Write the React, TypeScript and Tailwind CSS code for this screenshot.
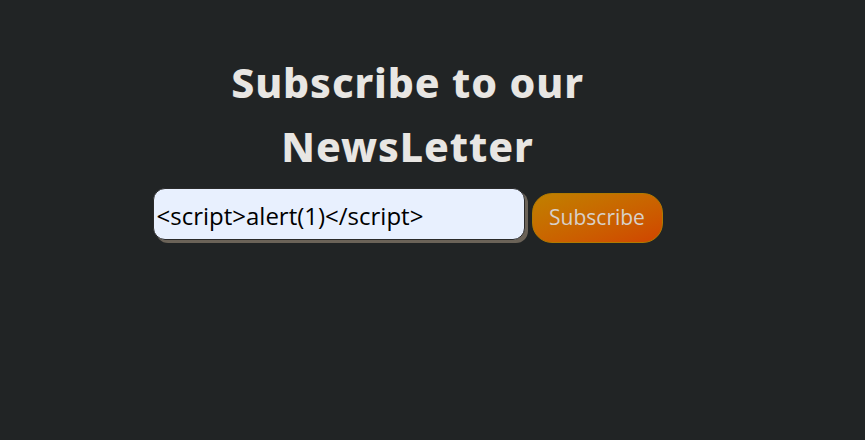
import React from "react";

export default function App() {
  return (
    <div className="w-[865px] h-[440px] bg-[#212425] overflow-hidden">
      <div className="w-[815px] flex flex-col items-center pt-[50px]">
        <h1 className="text-[41px] leading-[64px] font-extrabold text-[#e8e6e3] text-center w-[420px] tracking-[0.9px]" style={{ fontFamily: "'Noto Sans', sans-serif" }}>
          Subscribe to our NewsLetter
        </h1>
        <div className="flex items-start gap-[7px] mt-[10px]" style={{ fontFamily: "'Open Sans', sans-serif" }}>
          <div className="w-[372px] h-[52px] rounded-[12px] bg-[#e8f0fe] border border-[#2a2a2a] shadow-[3px_3px_0_#6b6358] flex items-center pl-[3px] pt-[3px] text-[24px] text-black">
            &lt;script&gt;alert(1)&lt;/script&gt;
          </div>
          <button className="w-[131px] h-[50px] mt-[5px] rounded-[20px] border border-[#b07a00] bg-gradient-to-br from-[#c08000] to-[#d04400] text-[21px] text-[#d8d0c8]">
            Subscribe
          </button>
        </div>
      </div>
    </div>
  );
}
